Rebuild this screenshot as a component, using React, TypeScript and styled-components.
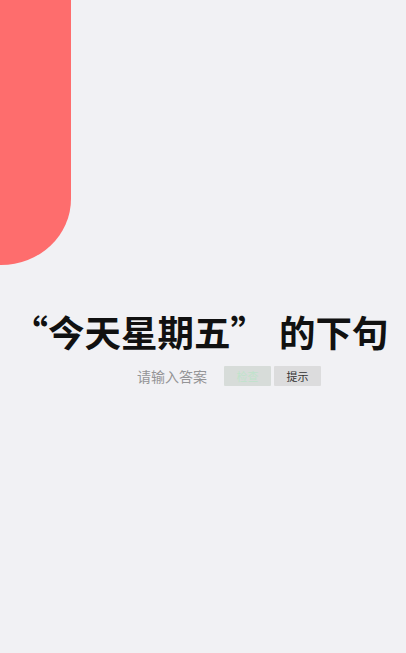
import React from 'react';
import styled, { createGlobalStyle } from 'styled-components';

const GlobalStyle = createGlobalStyle`
  html, body {
    margin: 0;
    padding: 0;
    background: #f1f1f4;
    font-family: "Noto Sans CJK SC", "Noto Sans", sans-serif;
  }
`;

const Page = styled.div`
  width: 406px;
  height: 653px;
  display: flex;
  flex-direction: column;
  overflow: hidden;
`;

const Tab = styled.div`
  width: 71px;
  height: 265px;
  background: #fe6d6d;
  border-bottom-right-radius: 70px 66px;
`;

const Title = styled.h1`
  margin: 49px 0 0;
  padding-right: 6px;
  font-size: 36.5px;
  line-height: 36px;
  font-weight: 700;
  color: #111;
  text-align: center;
  white-space: nowrap;
`;

const Row = styled.div`
  margin-top: 16px;
  display: flex;
  align-items: center;
  padding-left: 137px;
  gap: 3px;
`;

const Answer = styled.input`
  width: 84px;
  height: 20px;
  padding: 0;
  border: none;
  outline: none;
  background: transparent;
  font-family: inherit;
  font-size: 14px;
  color: #333;
  &::placeholder {
    color: #949496;
  }
`;

const Button = styled.button<{ $muted?: boolean }>`
  width: 47px;
  height: 20px;
  padding: 0;
  border: none;
  border-radius: 1px;
  background: ${p => (p.$muted ? '#d7dcd9' : '#dcdcdd')};
  color: ${p => (p.$muted ? '#bfe3cb' : '#333')};
  font-family: inherit;
  font-size: 11px;
  line-height: 20px;
  cursor: pointer;
`;

export default function App() {
  return (
    <>
      <GlobalStyle />
      <Page>
        <Tab />
        <Title>“今天星期五”{'\u2004'}的下句</Title>
        <Row>
          <Answer placeholder="请输入答案" />
          <Button $muted>检查</Button>
          <Button>提示</Button>
        </Row>
      </Page>
    </>
  );
}
